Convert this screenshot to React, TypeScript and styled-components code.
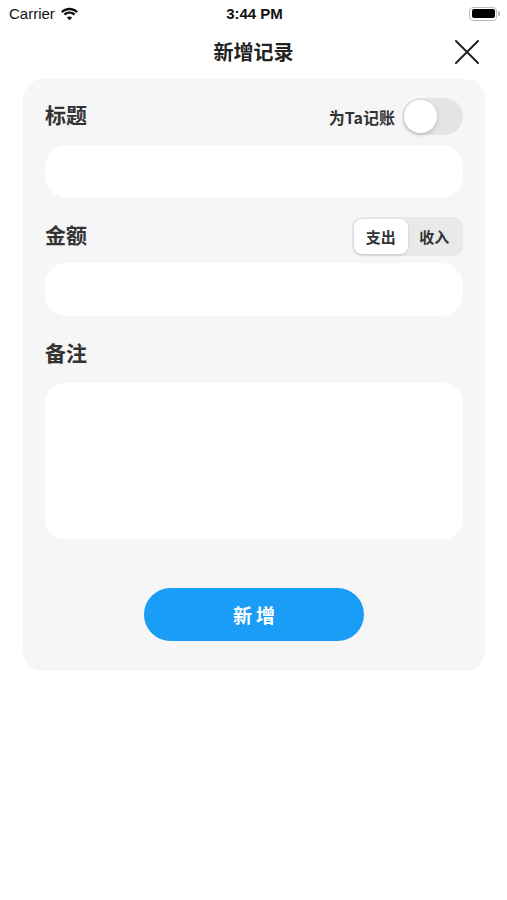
import React, { useState } from "react";
import styled, { createGlobalStyle } from "styled-components";

const GlobalStyle = createGlobalStyle`
  html, body {
    margin: 0;
    padding: 0;
    background: #ffffff;
    font-family: "Noto Sans CJK SC", "Noto Sans", "Liberation Sans", sans-serif;
    color: #222;
  }
`;

const Screen = styled.div`
  width: 507px;
  min-height: 900px;
  background: #fff;
`;

const StatusBar = styled.div`
  height: 27px;
  display: grid;
  grid-template-columns: 1fr auto 1fr;
  align-items: center;
  padding: 0 7px 0 9px;
  font-family: "Liberation Sans", Arial, sans-serif;
  font-size: 15px;
  color: #111;
`;

const Carrier = styled.div`
  display: flex;
  align-items: center;
  gap: 5px;
`;

const Clock = styled.div`
  font-weight: 600;
`;

const Battery = styled.div`
  justify-self: end;
  display: flex;
  align-items: center;
  gap: 1px;
`;

const BatteryBody = styled.div`
  border: 1.5px solid #bdbdbd;
  border-radius: 4px;
  padding: 1.5px;
  box-sizing: border-box;
  width: 28px;
  height: 14px;
  &::after {
    content: "";
    display: block;
    height: 100%;
    background: #000;
    border-radius: 2px;
  }
`;

const BatteryCap = styled.div`
  width: 2px;
  height: 5px;
  background: #bdbdbd;
  border-radius: 0 1px 1px 0;
`;

const NavBar = styled.div`
  height: 52px;
  display: flex;
  align-items: center;
  justify-content: center;
  position: relative;
`;

const NavTitle = styled.h1`
  margin: 0 0 4px;
  font-size: 20px;
  font-weight: 600;
  color: #222;
`;

const CloseButton = styled.button`
  position: absolute;
  right: 27px;
  top: 12px;
  width: 26px;
  height: 26px;
  padding: 0;
  border: none;
  background: none;
  display: flex;
  align-items: center;
  justify-content: center;
`;

const Card = styled.div`
  margin: 0 22px 0 23px;
  background: #f6f6f6;
  border-radius: 20px;
  padding: 19px 22px 30px 22px;
  display: flex;
  flex-direction: column;
`;

const FieldHeader = styled.div<{ $top?: number }>`
  height: 37px;
  margin-top: ${(p) => p.$top ?? 0}px;
  display: flex;
  align-items: center;
  justify-content: space-between;
`;

const Label = styled.div`
  font-size: 21px;
  line-height: 1;
  font-weight: 600;
  color: #333;
  padding-bottom: 4px;
`;

const ToggleWrap = styled.label`
  display: flex;
  align-items: center;
  gap: 7px;
  font-size: 16px;
  font-weight: 600;
  color: #333;
`;

const Switch = styled.button<{ $on: boolean }>`
  width: 61px;
  height: 37px;
  border-radius: 19px;
  border: none;
  padding: 2px;
  background: ${(p) => (p.$on ? "#1a9df6" : "#e4e4e4")};
  display: flex;
  justify-content: ${(p) => (p.$on ? "flex-end" : "flex-start")};
  cursor: pointer;
  &::before {
    content: "";
    width: 33px;
    height: 33px;
    border-radius: 50%;
    background: #fff;
    box-shadow: 0 2px 4px rgba(0, 0, 0, 0.18);
  }
`;

const Segmented = styled.div`
  display: flex;
  background: #e9e9e9;
  border-radius: 10px;
  padding: 2px;
  height: 39px;
  box-sizing: border-box;
  width: 111px;
`;

const Segment = styled.button<{ $active: boolean }>`
  flex: 1;
  border: none;
  border-radius: 8px;
  background: ${(p) => (p.$active ? "#fff" : "transparent")};
  box-shadow: ${(p) => (p.$active ? "0 1px 3px rgba(0,0,0,0.15)" : "none")};
  font-family: inherit;
  font-size: 15px;
  font-weight: 600;
  color: #333;
  padding: 0;
  cursor: pointer;
`;

const Input = styled.input<{ $top: number }>`
  margin-top: ${(p) => p.$top}px;
  height: 53px;
  border: none;
  border-radius: 22px;
  background: #fff;
  padding: 0 18px;
  font-size: 16px;
  outline: none;
`;

const TextArea = styled.textarea`
  margin-top: 10px;
  height: 156px;
  border: none;
  border-radius: 20px;
  background: #fff;
  padding: 14px 18px;
  box-sizing: border-box;
  font-size: 16px;
  font-family: inherit;
  resize: none;
  outline: none;
`;

const SubmitButton = styled.button`
  align-self: center;
  margin-top: 49px;
  width: 220px;
  height: 53px;
  border: none;
  border-radius: 27px;
  background: #1a9df6;
  color: #fff;
  font-family: inherit;
  font-size: 19px;
  font-weight: 600;
  letter-spacing: 4px;
  text-indent: 4px;
  cursor: pointer;
`;

const Wifi = () => (
  <svg width="19" height="14" viewBox="0 0 19 14">
    <path d="M9.5 3.2c2.6 0 5 1 6.8 2.7l1.6-1.7C15.7 2.1 12.7.8 9.5.8S3.3 2.1 1.1 4.2l1.6 1.7C4.5 4.2 6.9 3.2 9.5 3.2z" fill="#111" />
    <path d="M9.5 6.8c1.6 0 3.1.6 4.2 1.6l1.6-1.7C13.8 5.3 11.7 4.4 9.5 4.4S5.2 5.3 3.7 6.7l1.6 1.7c1.1-1 2.6-1.6 4.2-1.6z" fill="#111" />
    <path d="M9.5 13.2l2.6-2.8c-.7-.6-1.6-1-2.6-1s-1.9.4-2.6 1z" fill="#111" />
  </svg>
);

export default function App() {
  const [forTa, setForTa] = useState(false);
  const [type, setType] = useState<"out" | "in">("out");

  return (
    <Screen>
      <GlobalStyle />
      <StatusBar>
        <Carrier>
          Carrier <Wifi />
        </Carrier>
        <Clock>3:44 PM</Clock>
        <Battery>
          <BatteryBody />
          <BatteryCap />
        </Battery>
      </StatusBar>
      <NavBar>
        <NavTitle>新增记录</NavTitle>
        <CloseButton aria-label="关闭">
          <svg width="26" height="26" viewBox="0 0 26 26">
            <path d="M2 2L24 24M24 2L2 24" stroke="#222" strokeWidth="2" strokeLinecap="round" />
          </svg>
        </CloseButton>
      </NavBar>
      <Card>
        <FieldHeader>
          <Label>标题</Label>
          <ToggleWrap>
            为Ta记账
            <Switch $on={forTa} onClick={() => setForTa(!forTa)} />
          </ToggleWrap>
        </FieldHeader>
        <Input $top={10} />
        <FieldHeader $top={20}>
          <Label>金额</Label>
          <Segmented>
            <Segment $active={type === "out"} onClick={() => setType("out")}>支出</Segment>
            <Segment $active={type === "in"} onClick={() => setType("in")}>收入</Segment>
          </Segmented>
        </FieldHeader>
        <Input $top={8} />
        <FieldHeader $top={20}>
          <Label>备注</Label>
        </FieldHeader>
        <TextArea />
        <SubmitButton>新增</SubmitButton>
      </Card>
    </Screen>
  );
}
